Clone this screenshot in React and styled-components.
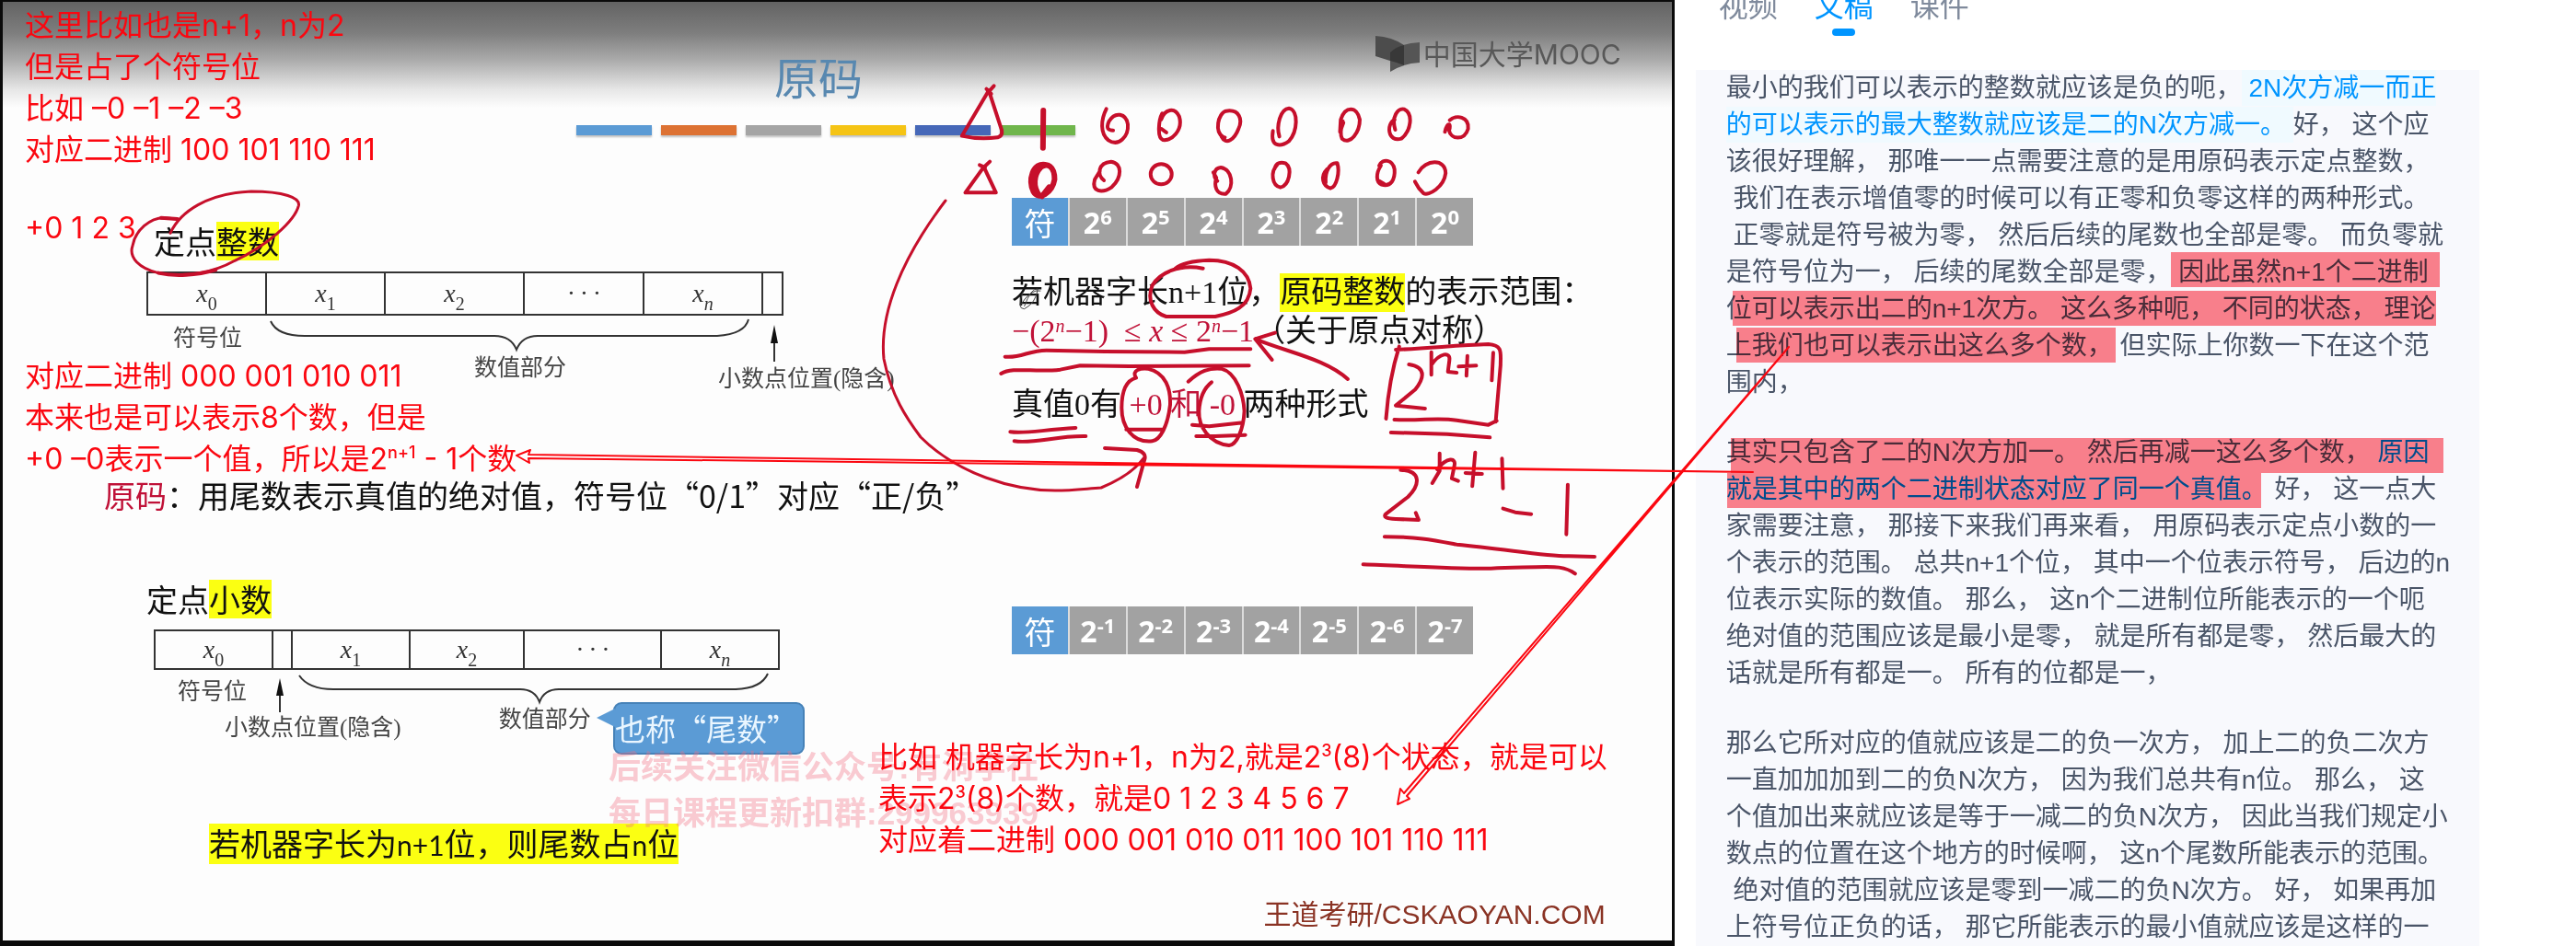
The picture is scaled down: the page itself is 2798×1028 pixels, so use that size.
import React from "react";
import styled, { createGlobalStyle } from "styled-components";

const cjk = `"Noto Sans CJK SC", sans-serif`;

const GlobalStyle = createGlobalStyle`
  * { box-sizing: border-box; }
  body { margin: 0; background: #fff; font-family: ${cjk}; }
  p, h1, h2 { margin: 0; font-weight: 400; }
`;

const Page = styled.main`
  position: relative;
  display: grid;
  grid-template-columns: 65% 35%;
  height: 100vh;
  overflow: hidden;
`;

/* ---------- lecture slide ---------- */

const Slide = styled.section`
  position: relative;
  border: 0 solid #0a0a0a;
  border-width: 2px 3px 6px 3px;
  background: linear-gradient(#636363 0, #7e7e7e 34px, #a9a9a9 62px, #e6e6e6 95px, #fdfdfd 115px);
`;

const SlideHeader = styled.header`
  padding: 48px 0 0 623px;
`;

const Title = styled.h1`
  padding-left: 215px;
  font-size: 48px;
  line-height: 64px;
  color: #5888b0;
`;

const Stripes = styled.div`
  display: flex;
  gap: 10px;
  margin-top: 22px;
`;

const Stripe = styled.span`
  width: 82px;
  height: 11px;
  background: ${(p) => p.$color};
  box-shadow: 0 2px 2px rgba(0, 0, 0, 0.25);
`;

const Brand = styled.div`
  position: absolute;
  top: 37px;
  right: 55px;
  display: flex;
  align-items: center;
  gap: 4px;
  font-family: Inter, ${cjk};
  font-size: 30px;
  line-height: 40px;
  color: #585858;
`;

const SlideBody = styled.div`
  display: grid;
  grid-template-columns: 1096px 1fr;
`;

const Column = styled.div`
  display: flex;
  flex-direction: column;
  align-items: flex-start;
`;

const Text = styled.p`
  margin-top: ${(p) => p.$top || 0}px;
  margin-left: ${(p) => p.$left || 0}px;
  font-family: ${(p) => (p.$serif ? `"Liberation Serif", ${cjk}` : cjk)};
  font-size: 34px;
  line-height: 42px;
  white-space: pre;
  color: #111;
`;

const Marker = styled.mark`
  display: inline-block;
  background: #fbff12;
  color: inherit;
`;

const Latin = styled.span`
  font-family: Lato, sans-serif;
  font-size: 30px;
`;

const Crimson = styled.span`
  color: #c01238;
`;

const Exponent = styled.sup`
  font-size: 20px;
  line-height: 0;
  vertical-align: 10px;
  font-style: italic;
`;

const Figure = styled.figure`
  margin: ${(p) => p.$top}px 0 0 ${(p) => p.$left}px;
  height: ${(p) => p.$height}px;
`;

const Register = styled.div`
  display: flex;
  height: ${(p) => p.$height}px;
  width: max-content;
  border: 2px solid #333;
`;

const Cell = styled.div`
  display: flex;
  align-items: center;
  justify-content: center;
  width: ${(p) => p.$width}px;
  font-family: "Liberation Serif", serif;
  font-style: italic;
  font-size: 28px;
  color: #333;
  & + & { border-left: 2px solid #333; }
  sub {
    font-size: 20px;
    line-height: 0;
    vertical-align: -9px;
    font-style: ${(p) => (p.$italicSub ? "italic" : "normal")};
  }
`;

const Captions = styled.figcaption`
  position: relative;
  display: flex;
  align-items: flex-start;
`;

const Caption = styled.span`
  margin: ${(p) => p.$top}px 0 0 ${(p) => p.$left}px;
  font-family: "Liberation Serif", ${cjk};
  font-size: 25px;
  line-height: 30px;
  white-space: nowrap;
  color: #444;
`;

const FigureLines = styled.svg`
  position: absolute;
  top: 0;
  left: 0;
  overflow: visible;
`;

const Callout = styled.span`
  position: absolute;
  top: 35px;
  left: 499px;
  width: 208px;
  height: 57px;
  border: 2px solid #4682b8;
  border-radius: 9px;
  background: #5b9bd5;
  color: #eaf6ff;
  font-size: 33px;
  line-height: 53px;
  white-space: nowrap;
  &::before {
    content: "";
    position: absolute;
    left: -20px;
    top: 5px;
    border: 10px solid transparent;
    border-left: 0;
    border-right: 20px solid #5b9bd5;
  }
`;

const Weights = styled.div`
  display: grid;
  grid-template-columns: repeat(8, 1fr);
  gap: 2px;
  width: 501px;
  height: 52px;
  margin-top: ${(p) => p.$top}px;
  background: #dcdcdc;
`;

const Weight = styled.span`
  display: flex;
  align-items: center;
  justify-content: center;
  background: ${(p) => (p.$sign ? "#5b9bd5" : "#a2a2a2")};
  color: #fff;
  font-family: "Open Sans", ${cjk};
  font-weight: ${(p) => (p.$sign ? 400 : 700)};
  font-size: ${(p) => (p.$sign ? 34 : 32)}px;
  sup {
    font-size: 22px;
    line-height: 0;
    vertical-align: 10px;
  }
`;

const Credit = styled.p`
  align-self: flex-end;
  margin: 265px 72px 0 0;
  font-family: "Liberation Sans", ${cjk};
  font-size: 30px;
  line-height: 36px;
  color: #8a3324;
`;

const Watermark = styled.p`
  position: absolute;
  left: 658px;
  top: 807px;
  font-family: "Liberation Sans", ${cjk};
  font-size: 35px;
  font-weight: 700;
  line-height: 50px;
  color: rgba(240, 110, 130, 0.36);
  white-space: nowrap;
`;

/* typed notes laid over the slide */
const Note = styled.p`
  position: absolute;
  left: ${(p) => p.$x}px;
  top: ${(p) => p.$y}px;
  font-family: Inter, ${cjk};
  font-size: 32px;
  line-height: 45px;
  white-space: pre;
  color: #fb0710;
  sup {
    font-size: 18px;
    font-weight: 500;
    line-height: 0;
    vertical-align: 12px;
  }
`;

/* ---------- transcript ---------- */

const Side = styled.aside`
  display: flex;
  flex-direction: column;
  min-height: 0;
  padding: 0 105px 0 23px;
`;

const Tabs = styled.nav`
  display: flex;
  gap: 40px;
  height: 92px;
  margin-top: -16px;
  padding-left: 25px;
  flex: none;
`;

const Tab = styled.button`
  display: flex;
  flex-direction: column;
  align-items: center;
  gap: 7px;
  padding: 0;
  border: 0;
  background: none;
  font-family: ${cjk};
  font-size: 32px;
  line-height: 40px;
  color: ${(p) => (p.$active ? "#0095ff" : "#7f8a9c")};
  &::after {
    content: "";
    width: 25px;
    height: 8px;
    border-radius: 4px;
    background: ${(p) => (p.$active ? "#0095ff" : "transparent")};
  }
`;

const Transcript = styled.article`
  flex: 1;
  min-height: 0;
  overflow: hidden;
  padding: 0 33px;
  background: #f8f9fd;
`;

const Paragraph = styled.p`
  margin: ${(p) => (p.$first ? 0 : 36)}px 0 0;
  font-family: "Liberation Sans", ${cjk};
  font-size: 28px;
  line-height: 40px;
  white-space: pre;
  color: #4a5568;
`;

const Spoken = styled.span`
  padding: 4px 0;
  color: #0095ff;
  background: ${(p) => (p.$plain ? "none" : "#f0faff")};
`;

const Highlight = styled.i`
  position: absolute;
  left: ${(p) => p.$x}px;
  top: ${(p) => p.$y}px;
  width: ${(p) => p.$w}px;
  height: 38px;
  background: #ff828c;
  mix-blend-mode: multiply;
`;

const Ink = styled.svg`
  position: absolute;
  top: 0;
  left: 0;
  pointer-events: none;
  path, ellipse { vector-effect: non-scaling-stroke; }
`;

const stripes = ["#5b9bd5", "#dd7233", "#a5a5a5", "#f5c415", "#4668b8", "#70b64c"];

const highlights = [
  [2358, 274, 292],
  [1882, 316, 764],
  [1886, 356, 412],
  [1880, 476, 774],
  [1876, 514, 580],
];

function X({ s }) {
  return <span>x<sub>{s}</sub></span>;
}

function Weighted({ top, powers }) {
  return (
    <Weights $top={top}>
      <Weight $sign>符</Weight>
      {powers.map((p) => (
        <Weight key={p}><span>2<sup>{p}</sup></span></Weight>
      ))}
    </Weights>
  );
}

function BrandMark() {
  return (
    <svg width="48" height="40" viewBox="0 0 48 40" aria-hidden="true">
      <path d="M0 0 Q18 1 31 10 V32 Q16 27 0 22 Z" fill="#4c4c4c" />
      <path d="M16 18 Q27 8 48 7 V29 Q30 30 16 39 Z" fill="#555" />
      <path d="M16 18 Q22 12 31 10 V32 Q24 29 16 27 Z" fill="#383838" />
    </svg>
  );
}

function Handwriting() {
  return (
    <Ink width="2798" height="1028" viewBox="0 0 2798 1028" fill="none" stroke="#c60f2b" strokeWidth="4" strokeLinecap="round" strokeLinejoin="round" aria-hidden="true">
      <g transform="scale(.593 .3333)">
        <path strokeWidth="3" d="M312 760 C330 690 380 630 460 624 C520 624 550 645 547 670 C540 720 490 800 430 850 C390 890 340 905 290 890 C255 875 235 840 243 800 C248 750 275 710 300 710 L325 714" />
        <path d="M290 890 C320 902 360 898 395 880 M295 710 L325 714" />
      </g>
      <g transform="translate(1030 80) scale(.37 .3333)">
        <path d="M134 40 L118 60 M112 50 L126 66 M119 55 L40 203 Q90 216 145 208 Q160 203 157 185 L119 55" />
        <path strokeWidth="6" d="M279 120 L278 242" />
        <path d="M464 115 C448 150 445 195 470 217 C500 240 530 205 527 165 C522 130 490 122 472 155 C462 180 470 185 484 185" />
        <path d="M625 150 C635 115 665 108 678 140 C690 185 655 220 630 216 C612 210 618 150 628 130 M625 180 L640 192" />
        <path d="M808 208 C780 190 792 130 815 122 C855 115 865 150 852 180 C840 215 815 235 802 205 L812 208" />
        <path d="M972 205 C962 170 975 115 1000 113 C1030 120 1025 190 1000 220 C975 240 945 240 953 187" />
        <path d="M1158 155 C1152 180 1150 200 1156 212 C1180 235 1208 190 1208 150 C1200 105 1165 105 1152 150 L1150 190 L1160 160" />
        <path d="M1312 183 C1300 140 1320 112 1338 116 C1365 130 1360 185 1330 212 C1290 225 1285 165 1310 150" />
        <path d="M1458 190 C1465 155 1478 162 1470 185 C1475 215 1515 220 1526 180 C1530 140 1490 132 1472 152" />
        <path d="M122 287 L100 310 M92 298 L108 306 M102 308 L50 388 L140 388 L106 308" />
        <path strokeWidth="6" d="M290 298 C245 285 235 350 250 385 C265 415 305 390 312 345 C312 300 290 290 272 305 C250 330 248 370 268 398 M296 370 L275 400" />
        <path d="M457 348 C435 330 440 290 478 287 C512 292 510 340 480 370 C450 392 420 385 430 345 L445 318" />
        <ellipse cx="625" cy="328" rx="31" ry="33" />
        <path d="M790 350 C775 335 780 308 800 306 C835 312 840 370 815 392 C785 395 780 365 787 340 L778 322" />
        <path d="M965 298 C945 320 950 365 975 371 C1000 365 1012 310 990 292 C975 288 962 290 958 310" />
        <path d="M1112 312 C1092 335 1098 365 1122 374 C1140 370 1150 320 1142 292 C1120 288 1105 320 1108 355" />
        <path d="M1270 300 C1255 325 1255 355 1272 362 C1300 370 1312 345 1310 312 C1305 280 1275 275 1265 300 M1265 350 L1280 360" />
        <path d="M1380 322 C1400 280 1460 275 1460 325 C1455 370 1410 400 1395 390 Q1380 375 1370 352" />
      </g>
      <path strokeWidth="3" d="M1027 218 C980 280 955 340 960 390 C968 430 985 455 1000 475 C1040 515 1100 533 1146 533 C1165 533 1180 531 1196 530 C1220 520 1235 508 1242 498" />
      <path d="M1200 487 L1235 489 Q1246 492 1243 500 L1235 529" />
      <g transform="translate(1080 290) scale(.3333)">
        <path strokeWidth="1" stroke="#444" d="M92 85 Q72 138 98 137 Q135 118 142 72 Q120 68 98 128 M85 125 Q120 70 150 78" />
        <path d="M680 5 C600 -10 540 20 515 60 C495 110 520 150 560 162 L720 162 C780 150 830 130 835 70 C830 15 780 -22 700 -22 C650 -20 610 -12 590 5" />
        <path d="M35 293 C90 298 110 272 170 272 L360 276 L620 278 L700 268 L835 268" />
        <path d="M22 348 C60 325 130 345 215 335 L280 322 L440 324 L830 322" />
        <path d="M1152 366 C1080 300 960 280 850 235 L915 215 M850 235 L905 303" />
        <path d="M462 362 C445 335 480 330 500 332 C560 345 575 400 573 450 C565 520 540 565 515 568 C450 575 415 520 415 460 C415 400 430 370 462 362 M430 530 L550 530" />
        <path d="M632 374 C670 340 700 328 740 332 C790 345 812 420 815 470 C812 530 790 580 765 582 C700 575 665 520 667 470 C670 420 690 390 708 376 M645 515 L700 520 L810 508 M658 552 L720 552 L818 548" />
        <path d="M52 538 C100 545 150 532 265 525 M65 568 C130 578 200 550 298 552" />
      </g>
      <g transform="translate(1000 320) scale(.5293 .3333)">
        <path d="M955 405 C960 300 970 230 982 170 M975 180 C1050 175 1100 165 1165 162 C1195 165 1190 190 1190 230 L1180 415 M972 408 C1030 412 1060 400 1100 410 L1165 425 L1182 412 M965 450 L1080 455 L1168 466" />
        <path d="M1002 228 C1042 238 1030 280 1015 310 L975 362 L1035 372" />
        <path d="M1048 188 L1048 262 M1048 230 C1065 190 1088 185 1085 215 L1082 252 L1100 255 M1122 200 L1120 265 M1104 235 L1140 232 M1175 190 L1172 280" />
        <path d="M985 572 C1028 575 1025 620 1000 660 L955 715 Q945 730 975 732 L1022 735 L1016 712" />
        <path d="M1065 518 L1065 575 L1050 615 M1060 570 C1080 530 1100 530 1095 560 L1090 600 L1103 608 M1138 515 L1132 625 M1118 582 L1152 585 M1193 535 L1195 632" />
        <path d="M1195 698 L1220 710 L1253 716 M1328 620 L1325 782" />
        <path d="M952 790 C1020 790 1050 800 1100 815 C1200 830 1290 855 1330 853 L1383 855 M908 880 C1000 885 1100 895 1170 893 C1250 890 1290 885 1310 890 Q1330 895 1343 910" />
      </g>
    </Ink>
  );
}

function Arrows() {
  return (
    <Ink width="2798" height="1028" viewBox="0 0 2798 1028" fill="none" stroke="#fb0710" strokeWidth="2" strokeLinejoin="round" aria-hidden="true">
      <path d="M1904 513 L574 494 L576 489 L561 495 L575 503 L574 498 Z" />
      <path d="M1943 377 L1525 862 L1521 857 L1518 874 L1531 868 L1528 865 Z" />
    </Ink>
  );
}

export default function App() {
  return (
    <>
      <GlobalStyle />
      <Page lang="zh-CN">
        <Slide>
          <SlideHeader>
            <Title>原码</Title>
            <Stripes>
              {stripes.map((c) => <Stripe key={c} $color={c} />)}
            </Stripes>
          </SlideHeader>
          <Brand><BrandMark />中国大学MOOC</Brand>

          <SlideBody>
            <Column>
              <Text as="h2" $top={94} $left={164}>定点<Marker>整数</Marker></Text>
              <Figure $top={12} $left={156} $height={142}>
                <Register $height={48}>
                  <Cell $width={127}><X s="0" /></Cell>
                  <Cell $width={129}><X s="1" /></Cell>
                  <Cell $width={151}><X s="2" /></Cell>
                  <Cell $width={130}>· · ·</Cell>
                  <Cell $width={129} $italicSub><X s="n" /></Cell>
                  <Cell $width={22} />
                </Register>
                <Captions>
                  <FigureLines width="691" height="88" fill="none" stroke="#333" strokeWidth="2" aria-hidden="true">
                    <path d="M135 6 Q142 22 172 22 H378 Q396 22 402 37 Q408 22 425 22 H620 Q650 20 654 4" />
                    <path d="M682 50 V20" />
                    <path d="M682 10 L678 30 H686 Z" fill="#111" stroke="none" />
                  </FigureLines>
                  <Caption $top={10} $left={29}>符号位</Caption>
                  <Caption $top={42} $left={252}>数值部分</Caption>
                  <Caption $top={54} $left={165}>小数点位置(隐含)</Caption>
                </Captions>
              </Figure>
              <Text $top={80} $left={110}>
                <Crimson>原码</Crimson>：用尾数表示真值的绝对值，符号位“0/1”对应“正/负”
              </Text>
              <Text as="h2" $top={71} $left={156}>定点<Marker>小数</Marker></Text>
              <Figure $top={12} $left={164} $height={135}>
                <Register $height={44}>
                  <Cell $width={126}><X s="0" /></Cell>
                  <Cell $width={21} />
                  <Cell $width={128}><X s="1" /></Cell>
                  <Cell $width={124}><X s="2" /></Cell>
                  <Cell $width={149}>· · ·</Cell>
                  <Cell $width={128} $italicSub><X s="n" /></Cell>
                </Register>
                <Captions>
                  <FigureLines width="680" height="91" fill="none" stroke="#333" strokeWidth="2" aria-hidden="true">
                    <path d="M158 6 Q168 21 195 21 H398 Q414 21 419 35 Q424 21 440 21 H632 Q660 20 667 4" />
                    <path d="M137 46 V18" />
                    <path d="M137 9 L133 28 H141 Z" fill="#111" stroke="none" />
                  </FigureLines>
                  <Caption $top={9} $left={26}>符号位</Caption>
                  <Caption $top={48} $left={-24}>小数点位置(隐含)</Caption>
                  <Caption $top={39} $left={106}>数值部分</Caption>
                  <Callout>也称“尾数”</Callout>
                </Captions>
              </Figure>
              <Text $top={76} $left={224}>
                <Marker>若机器字长为<Latin>n+1</Latin>位，则尾数占<Latin>n</Latin>位</Marker>
              </Text>
            </Column>

            <Column>
              <Weighted top={68} powers={[6, 5, 4, 3, 2, 1, 0]} />
              <Text $serif $top={30}>若机器字长n+1位，<Marker>原码整数</Marker>的表示范围：</Text>
              <Text $serif>
                <Crimson>−(2<Exponent>n</Exponent>−1)  ≤ <i>x</i> ≤ 2<Exponent>n</Exponent>−1</Crimson>（关于原点对称）
              </Text>
              <Text $serif $top={38}>真值0有<Crimson> +0 和 -0 </Crimson>两种形式</Text>
              <Weighted top={198} powers={["-1", "-2", "-3", "-4", "-5", "-6", "-7"]} />
              <Credit>王道考研/CSKAOYAN.COM</Credit>
            </Column>
          </SlideBody>

          <Watermark>后续关注微信公众号:有洞学社<br />每日课程更新扣群:299963939</Watermark>
        </Slide>

        <Side>
          <Tabs>
            <Tab type="button">视频</Tab>
            <Tab type="button" $active>文稿</Tab>
            <Tab type="button">课件</Tab>
          </Tabs>
          <Transcript>
            <Paragraph $first>
              最小的我们可以表示的整数就应该是负的呃，<Spoken>{" 2N次方减一而正\n的可以表示的最大整数就应该是二的N次方减一。 "}</Spoken>
              {"好， 这个应\n该很好理解， 那唯一一点需要注意的是用原码表示定点整数，\n 我们在表示增值零的时候可以有正零和负零这样的两种形式。\n 正零就是符号被为零， 然后后续的尾数也全部是零。 而负零就\n是符号位为一， 后续的尾数全部是零， 因此虽然n+1个二进制\n位可以表示出二的n+1次方。 这么多种呃， 不同的状态， 理论\n上我们也可以表示出这么多个数， 但实际上你数一下在这个范\n围内，"}
            </Paragraph>
            <Paragraph>
              {"其实只包含了二的N次方加一。 然后再减一这么多个数， "}
              <Spoken $plain>{"原因\n就是其中的两个二进制状态对应了同一个真值。"}</Spoken>
              {" 好， 这一点大\n家需要注意， 那接下来我们再来看， 用原码表示定点小数的一\n个表示的范围。 总共n+1个位， 其中一个位表示符号， 后边的n\n位表示实际的数值。 那么， 这n个二进制位所能表示的一个呃\n绝对值的范围应该是最小是零， 就是所有都是零， 然后最大的\n话就是所有都是一。 所有的位都是一，"}
            </Paragraph>
            <Paragraph>
              {"那么它所对应的值就应该是二的负一次方， 加上二的负二次方\n一直加加加到二的负N次方， 因为我们总共有n位。 那么， 这\n个值加出来就应该是等于一减二的负N次方， 因此当我们规定小\n数点的位置在这个地方的时候啊， 这n个尾数所能表示的范围。\n 绝对值的范围就应该是零到一减二的负N次方。 好， 如果再加\n上符号位正负的话， 那它所能表示的最小值就应该是这样的一"}
            </Paragraph>
          </Transcript>
        </Side>

        {highlights.map(([x, y, w]) => <Highlight key={y} $x={x} $y={y} $w={w} />)}
        <Handwriting />
        <Note $x={27} $y={5}>{"这里比如也是n+1，n为2\n但是占了个符号位\n比如 –0 –1 –2 –3\n对应二进制 100 101 110 111"}</Note>
        <Note $x={27} $y={225}>+0 1 2 3</Note>
        <Note $x={27} $y={386}>
          {"对应二进制 000 001 010 011\n本来也是可以表示8个数，但是\n+0 –0表示一个值，所以是2"}<sup>n+1</sup>{" - 1个数"}
        </Note>
        <Note $x={954} $y={800}>
          {"比如 机器字长为n+1，n为2,就是2"}<sup>3</sup>{"(8)个状态，就是可以\n表示2"}<sup>3</sup>{"(8)个数，就是0 1 2 3 4 5 6 7\n对应着二进制 000 001 010 011 100 101 110 111"}
        </Note>
        <Arrows />
      </Page>
    </>
  );
}
